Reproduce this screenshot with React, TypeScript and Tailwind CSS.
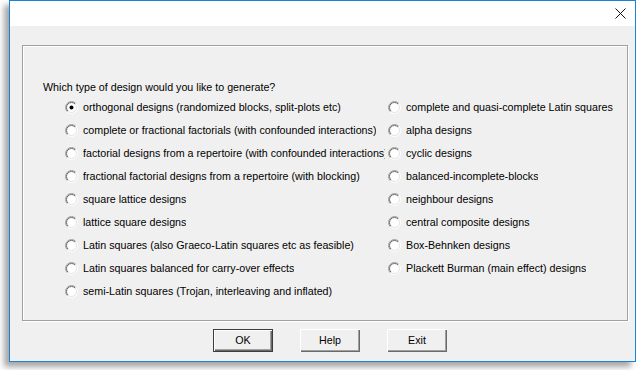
const leftOptions = [
  "orthogonal designs (randomized blocks, split-plots etc)",
  "complete or fractional factorials (with confounded interactions)",
  "factorial designs from a repertoire (with confounded interactions)",
  "fractional factorial designs from a repertoire (with blocking)",
  "square lattice designs",
  "lattice square designs",
  "Latin squares (also Graeco-Latin squares etc as feasible)",
  "Latin squares balanced for carry-over effects",
  "semi-Latin squares (Trojan, interleaving and inflated)",
];

const rightOptions = [
  "complete and quasi-complete Latin squares",
  "alpha designs",
  "cyclic designs",
  "balanced-incomplete-blocks",
  "neighbour designs",
  "central composite designs",
  "Box-Behnken designs",
  "Plackett Burman (main effect) designs",
];

function Radio({ checked }: { checked?: boolean }) {
  return (
    <svg width="13" height="13" viewBox="0 0 13 13" className="shrink-0">
      <defs>
        <linearGradient id="rOuter" x1="0" y1="0" x2="1" y2="1">
          <stop offset="0.45" stopColor="#a0a0a0" />
          <stop offset="0.55" stopColor="#ffffff" />
        </linearGradient>
        <linearGradient id="rInner" x1="0" y1="0" x2="1" y2="1">
          <stop offset="0.45" stopColor="#696969" />
          <stop offset="0.55" stopColor="#e3e3e3" />
        </linearGradient>
      </defs>
      <circle cx="6.5" cy="6.5" r="6" fill="none" stroke="url(#rOuter)" strokeWidth="1" />
      <circle cx="6.5" cy="6.5" r="5" fill="#ffffff" stroke="url(#rInner)" strokeWidth="1" />
      {checked && <circle cx="6.5" cy="6.5" r="2" fill="#000000" />}
    </svg>
  );
}

function Option({ label, checked, clip }: { label: string; checked?: boolean; clip?: boolean }) {
  return (
    <div className="flex h-[23px] items-center gap-[5px]">
      <Radio checked={checked} />
      <span className={`overflow-hidden whitespace-nowrap ${clip ? "max-w-[302px]" : ""}`}>{label}</span>
    </div>
  );
}

function Button({ label, isDefault }: { label: string; isDefault?: boolean }) {
  return (
    <div
      className={`flex h-[23px] w-[60px] items-center justify-center bg-[#f0f0f0] ${
        isDefault
          ? "border border-[#3c3c3c] shadow-[inset_1px_1px_0_#ffffff,inset_-1px_-1px_0_#696969,inset_-2px_-2px_0_#a0a0a0]"
          : "shadow-[inset_1px_1px_0_#ffffff,inset_-1px_-1px_0_#696969,inset_-2px_-2px_0_#a0a0a0]"
      }`}
    >
      {label}
    </div>
  );
}

export default function App() {
  return (
    <div className="h-[370px] w-[636px] bg-white font-['Liberation_Sans',Arial,sans-serif] text-[10.7px] leading-[13px] text-black">
      <div className="ml-[9px] flex h-[362px] w-[627px] flex-col border border-[#1883d7] bg-[#f0f0f0] shadow-[-5px_5px_6px_rgba(0,0,0,0.35)]">
        {/* Title bar */}
        <div className="flex h-[25px] items-start justify-end bg-white pr-[9px] pt-[7px]">
          <svg width="11" height="11" viewBox="0 0 11 11">
            <path d="M0.5 0.5 L10.5 10.5 M10.5 0.5 L0.5 10.5" stroke="#111" strokeWidth="1" />
          </svg>
        </div>

        {/* Group box */}
        <div className="ml-[12px] mt-[19px] h-[276px] w-[606px] border border-[#a0a0a0] pl-[20px] pt-[35px] shadow-[inset_1px_1px_0_#ffffff,1px_1px_0_#ffffff]">
          <div>Which type of design would you like to generate?</div>
          <div className="mt-[2px] flex pl-[22px]">
            <div className="w-[323px] overflow-hidden">
              {leftOptions.map((o, i) => (
                <Option key={o} label={o} checked={i === 0} clip />
              ))}
            </div>
            <div>
              {rightOptions.map((o) => (
                <Option key={o} label={o} />
              ))}
            </div>
          </div>
        </div>

        {/* Buttons */}
        <div className="mt-[8px] flex justify-center gap-[27px] pl-[15px]">
          <Button label="OK" isDefault />
          <Button label="Help" />
          <Button label="Exit" />
        </div>
      </div>
    </div>
  );
}
